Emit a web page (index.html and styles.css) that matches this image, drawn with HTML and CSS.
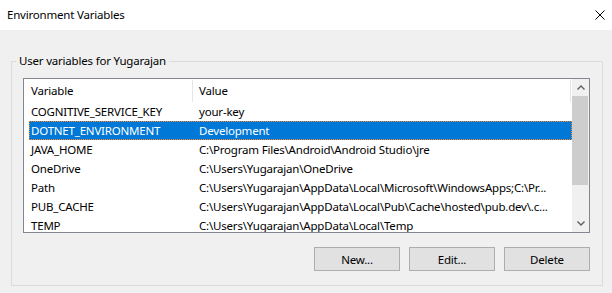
FILE: index.html
```html
<!DOCTYPE html>
<html lang="en">
  <head>
    <meta charset="UTF-8" />
    <title>Environment Variables</title>
    <link rel="stylesheet" href="styles.css">
  </head>
  <body>
    <div class="window">
      <div class="titlebar">
        <span class="title">Environment Variables</span>
        <svg class="close" width="10" height="10" viewBox="0 0 10 10">
          <path d="M0.5 0.5 L9.5 9.5 M9.5 0.5 L0.5 9.5" stroke="#000" stroke-width="1" fill="none" />
        </svg>
      </div>
      <div class="content">
        <fieldset class="group">
          <legend>User variables for Yugarajan</legend>
          <div class="listview">
            <div class="list-main">
              <div class="list-header">
                <div class="head head-name">Variable</div>
                <div class="head head-value">Value</div>
              </div>
              <div class="row">
                <div class="cell cell-name">COGNITIVE_SERVICE_KEY</div>
                <div class="cell cell-value">your-key</div>
              </div>
              <div class="row selected">
                <div class="cell cell-name">DOTNET_ENVIRONMENT</div>
                <div class="cell cell-value">Development</div>
              </div>
              <div class="row">
                <div class="cell cell-name">JAVA_HOME</div>
                <div class="cell cell-value">C:\Program Files\Android\Android Studio\jre</div>
              </div>
              <div class="row">
                <div class="cell cell-name">OneDrive</div>
                <div class="cell cell-value">C:\Users\Yugarajan\OneDrive</div>
              </div>
              <div class="row">
                <div class="cell cell-name">Path</div>
                <div class="cell cell-value">C:\Users\Yugarajan\AppData\Local\Microsoft\WindowsApps;C:\Pr...</div>
              </div>
              <div class="row">
                <div class="cell cell-name">PUB_CACHE</div>
                <div class="cell cell-value">C:\Users\Yugarajan\AppData\Local\Pub\Cache\hosted\pub.dev\.c...</div>
              </div>
              <div class="row">
                <div class="cell cell-name">TEMP</div>
                <div class="cell cell-value">C:\Users\Yugarajan\AppData\Local\Temp</div>
              </div>
            </div>
            <div class="scrollbar">
              <div class="arrow">
                <svg width="8" height="5" viewBox="0 0 8 5">
                  <path d="M0.5 4.5 L4 1 L7.5 4.5" stroke="#606060" stroke-width="1.4" fill="none" />
                </svg>
              </div>
              <div class="track">
                <div class="thumb"></div>
              </div>
              <div class="arrow">
                <svg width="8" height="5" viewBox="0 0 8 5">
                  <path d="M0.5 0.5 L4 4 L7.5 0.5" stroke="#606060" stroke-width="1.4" fill="none" />
                </svg>
              </div>
            </div>
          </div>
          <div class="buttons">
            <button class="btn">New...</button>
            <button class="btn">Edit...</button>
            <button class="btn">Delete</button>
          </div>
        </fieldset>
      </div>
    </div>
  </body>
</html>
```

FILE: styles.css
```css
body {
  margin: 0;
  padding: 0;
  background: #f0f0f0;
  font-family: "Noto Sans", "Open Sans", sans-serif;
  font-size: 11.5px;
  letter-spacing: -0.2px;
  color: #000;
}
.window {
  width: 612px;
  height: 293px;
  overflow: hidden;
}
.titlebar {
  height: 30px;
  background: #fff;
  display: flex;
  align-items: center;
  justify-content: space-between;
  padding: 0 7px 0 7px;
}
.title {
  line-height: 16px;
}
.close {
  display: block;
}
.content {
  padding-top: 23px;
}
.group {
  box-sizing: border-box;
  width: 592px;
  margin: 0 0 0 11px;
  padding: 9px 12px 14px 11px;
  border: 1px solid #dcdcdc;
  min-width: 0;
}
.group legend {
  padding: 0 3px;
  margin-left: -7px;
  line-height: 16px;
}
.listview {
  height: 155px;
  box-sizing: border-box;
  border: 1px solid #828790;
  background: #fff;
  display: flex;
  overflow: hidden;
}
.list-main {
  flex: 1;
  overflow: hidden;
}
.list-header {
  display: flex;
  height: 23px;
}
.head {
  box-sizing: border-box;
  line-height: 22px;
  border-right: 1px solid #e5e5e5;
  margin-top: 1px;
  flex-shrink: 0;
}
.head-name {
  width: 169px;
  padding-left: 7px;
}
.head-value {
  width: 378px;
  padding-left: 6px;
}
.row {
  display: flex;
  height: 19px;
  line-height: 19px;
  margin-left: 5px;
  white-space: nowrap;
}
.row.selected {
  background: #0078d7;
  color: #fff;
  outline: 1px dotted #ff8728;
  outline-offset: -1px;
}
.cell-name {
  width: 163px;
  flex-shrink: 0;
  padding-left: 2px;
  box-sizing: border-box;
  overflow: hidden;
}
.cell-value {
  padding-left: 7px;
}
.scrollbar {
  width: 17px;
  flex-shrink: 0;
  background: #f0f0f0;
  display: flex;
  flex-direction: column;
}
.arrow {
  height: 17px;
  display: flex;
  align-items: center;
  justify-content: center;
}
.track {
  flex: 1;
}
.thumb {
  height: 89px;
  width: 16px;
  background: #cdcdcd;
}
.buttons {
  display: flex;
  justify-content: flex-end;
  gap: 9px;
  margin-top: 14px;
}
.btn {
  width: 86px;
  height: 24px;
  box-sizing: border-box;
  background: #e1e1e1;
  border: 1px solid #adadad;
  font-family: inherit;
  font-size: 11.5px;
  letter-spacing: -0.2px;
  color: #000;
  padding: 0;
}
```
